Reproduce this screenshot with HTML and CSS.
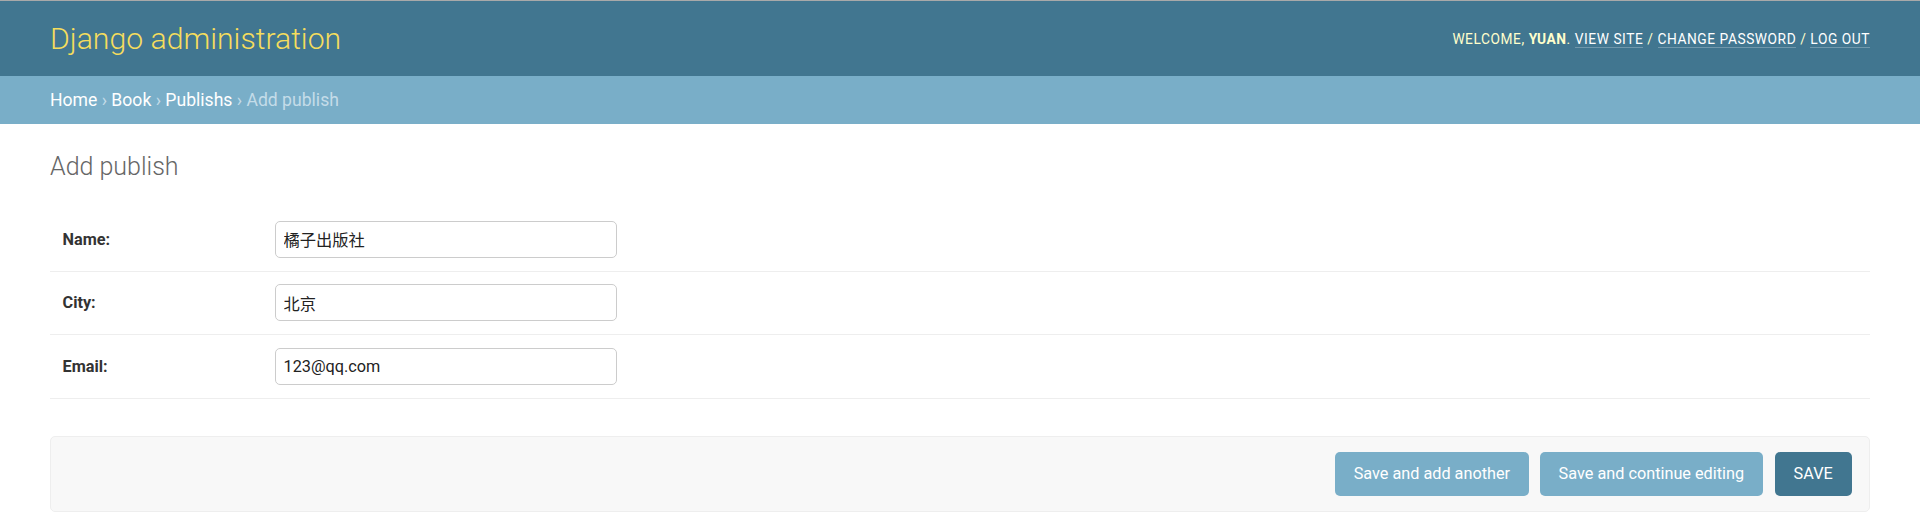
FILE: index.html
```html
<!DOCTYPE html>
<html lang="zh-hans">
<head>
<meta charset="utf-8">
<title>Add publish | Django site admin</title>
<link rel="stylesheet" href="styles.css">
</head>
<body>
<div class="topline"></div>
<header class="header">
  <div class="branding"><h1 class="site-name">Django administration</h1></div>
  <div class="user-tools">Welcome, <strong>yuan</strong>. <a href="#">View site</a> / <a href="#">Change password</a> / <a href="#">Log out</a></div>
</header>
<nav class="breadcrumbs"><a href="#">Home</a> › <a href="#">Book</a> › <a href="#">Publishs</a> › Add publish</nav>
<main class="content">
  <h1 class="page-title">Add publish</h1>
  <form class="change-form">
    <fieldset class="module">
      <div class="form-row">
        <label class="field-label" for="id_name">Name:</label>
        <input class="text-field" type="text" id="id_name" value="橘子出版社">
      </div>
      <div class="form-row">
        <label class="field-label" for="id_city">City:</label>
        <input class="text-field" type="text" id="id_city" value="北京">
      </div>
      <div class="form-row">
        <label class="field-label" for="id_email">Email:</label>
        <input class="text-field" type="text" id="id_email" value="123@qq.com">
      </div>
    </fieldset>
    <div class="submit-row">
      <input class="btn" type="button" value="Save and add another">
      <input class="btn" type="button" value="Save and continue editing">
      <input class="btn btn-default" type="button" value="Save">
    </div>
  </form>
</main>
</body>
</html>
```
FILE: styles.css
```css
html, body {
  margin: 0;
  padding: 0;
}
body {
  font-family: "Roboto", "Noto Sans CJK SC", "DejaVu Sans", sans-serif;
  font-size: 17.5px;
  color: #333;
  background: #fff;
}
.topline {
  height: 1px;
  background: #a9a9a9;
}
.header {
  height: 75px;
  padding: 0 50px;
  background: #417690;
  color: #ffc;
  display: flex;
  align-items: center;
  justify-content: space-between;
  line-height: 50px;
}
.site-name {
  margin: 0;
  font-size: 30.2px;
  font-weight: 300;
  color: #f5dd5d;
}
.user-tools {
  font-size: 13.75px;
  font-weight: 400;
  letter-spacing: 0.55px;
  text-transform: uppercase;
}
.user-tools strong {
  font-weight: 700;
}
.user-tools a {
  color: #fff;
  text-decoration: none;
  border-bottom: 1px solid rgba(255, 255, 255, 0.25);
}
.breadcrumbs {
  background: #79aec8;
  padding: 12.5px 50px;
  line-height: 23px;
  font-size: 17.6px;
  color: #c4dce8;
}
.breadcrumbs a {
  color: #fff;
  text-decoration: none;
}
.content {
  padding: 25px 50px 0;
}
.page-title {
  margin: 0 0 24px;
  font-size: 25px;
  line-height: 35px;
  font-weight: 300;
  color: #666;
}
.change-form {
  margin: 0;
}
.module {
  margin: 0 0 37.5px;
  padding: 0;
  border: none;
}
.form-row {
  display: flex;
  align-items: center;
  padding: 12.5px 12.5px 13px;
  border-bottom: 1px solid #eee;
}
.field-label {
  width: 200px;
  padding-right: 12.5px;
  padding-top: 2px;
  flex-shrink: 0;
  font-size: 16.25px;
  line-height: 1;
  font-weight: 700;
  color: #333;
}
.text-field {
  box-sizing: border-box;
  width: 342px;
  height: 37px;
  margin: 0;
  padding: 0 7.5px;
  border: 1px solid #ccc;
  border-radius: 5px;
  font-family: "Roboto", "Noto Sans CJK SC", sans-serif;
  font-size: 16.25px;
  color: #222;
  background: #fff;
}
.submit-row {
  display: flex;
  justify-content: flex-end;
  padding: 15px 17.5px;
  background: #f8f8f8;
  border: 1px solid #eee;
  border-radius: 5px;
}
.btn {
  height: 43.75px;
  margin: 0;
  padding: 0 18.75px;
  border: none;
  border-radius: 5px;
  background: #79aec8;
  color: #fff;
  font-family: "Roboto", sans-serif;
  font-size: 16.25px;
  line-height: 18.75px;
  cursor: pointer;
}
.btn + .btn {
  margin-left: 11px;
}
.btn-default {
  margin-left: 12px;
  background: #417690;
  text-transform: uppercase;
}
.btn + .btn-default {
  margin-left: 12px;
}
```
